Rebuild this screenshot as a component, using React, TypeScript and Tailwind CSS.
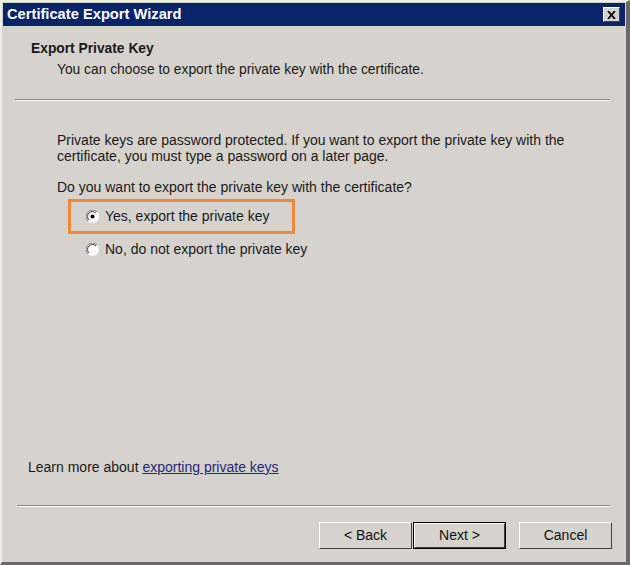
import React from "react";

const font = { fontFamily: "'Liberation Sans', Arial, sans-serif" };

function Radio({ checked }: { checked?: boolean }) {
  return (
    <svg width="13" height="13" viewBox="0 0 13 13" className="shrink-0">
      <circle cx="6.5" cy="6.5" r="6" fill="#ffffff" />
      <path d="M11 2 A6 6 0 0 0 2 11" fill="none" stroke="#808080" strokeWidth="1" />
      <path d="M10 3 A4.8 4.8 0 0 0 3 10" fill="none" stroke="#404040" strokeWidth="1" />
      <path d="M2 11 A6 6 0 0 0 11 2" fill="none" stroke="#f4f2ee" strokeWidth="1" />
      {checked && <circle cx="6.5" cy="6.5" r="2" fill="#000000" />}
    </svg>
  );
}

function Separator({ className }: { className?: string }) {
  return (
    <div className={`h-[2px] border-t border-t-[#8a8782] border-b border-b-white ${className ?? ""}`} />
  );
}

function WinButton({ label, isDefault }: { label: string; isDefault?: boolean }) {
  return (
    <div className={`h-[27px] w-[93px] ${isDefault ? "border border-black" : ""}`}>
      <div className="flex h-full w-full items-center justify-center border-t border-l border-t-white border-l-white border-b border-r border-b-[#404040] border-r-[#404040] bg-[#d6d3ce] text-[14px] text-[#111]">
        {label}
      </div>
    </div>
  );
}

export default function App() {
  return (
    <div
      style={font}
      className="relative flex h-[565px] w-[630px] flex-col overflow-hidden border-t-2 border-l-2 border-t-[#eeece6] border-l-[#eeece6] border-r-4 border-b-3 border-r-[#6b6965] border-b-[#6b6965] bg-[#d6d3ce] text-[14px] text-[#1a1a1a]"
    >
      {/* title bar */}
      <div className="mx-[1px] mt-[1px] flex h-[23px] items-center justify-between bg-[#0a246a] pl-[4px] pr-[5px]">
        <span className="text-[14.7px] font-bold text-white">Certificate Export Wizard</span>
        <div className="flex h-[15px] w-[17px] items-center justify-center border-t border-l border-t-white border-l-white border-b border-r border-b-[#404040] border-r-[#404040] bg-[#d6d3ce]">
          <svg width="9" height="8" viewBox="0 0 9 8">
            <path d="M1 0 L8 8 M8 0 L1 8" stroke="#000" strokeWidth="1.8" />
          </svg>
        </div>
      </div>

      {/* header */}
      <div className="mt-[14px] pl-[29px] text-[13.8px] leading-[17px]">
        <div className="font-bold">Export Private Key</div>
        <div className="mt-[4px] pl-[26px]">You can choose to export the private key with the certificate.</div>
      </div>
      <Separator className="mt-[21px] ml-[13px] mr-[16px]" />

      {/* body */}
      <div className="mt-[31px] pl-[55px] leading-[16px]">
        <p>
          Private keys are password protected. If you want to export the private key with the
          <br />
          certificate, you must type a password on a later page.
        </p>
        <p className="mt-[15px]">Do you want to export the private key with the certificate?</p>
      </div>

      <div className="mt-[4px] ml-[66px] flex h-[35px] w-[227px] items-center gap-[6px] whitespace-nowrap border-[3px] border-[#f0883a] pl-[15px]">
        <Radio checked />
        <span>Yes, export the private key</span>
      </div>
      <div className="mt-[7px] ml-[84px] flex h-[16px] items-center gap-[6px] whitespace-nowrap">
        <Radio />
        <span>No, do not export the private key</span>
      </div>

      <div className="flex-1" />

      <div className="pl-[26px] leading-[16px]">
        Learn more about{" "}
        <span className="text-[#262680] underline">exporting private keys</span>
      </div>
      <Separator className="mt-[30px] ml-[15px] mr-[16px]" />

      <div className="mt-[15px] mb-[13px] flex justify-end pr-[14px]">
        <WinButton label="< Back" />
        <div className="ml-[1px]">
          <WinButton label="Next >" isDefault />
        </div>
        <div className="ml-[13px]">
          <WinButton label="Cancel" />
        </div>
      </div>
    </div>
  );
}
